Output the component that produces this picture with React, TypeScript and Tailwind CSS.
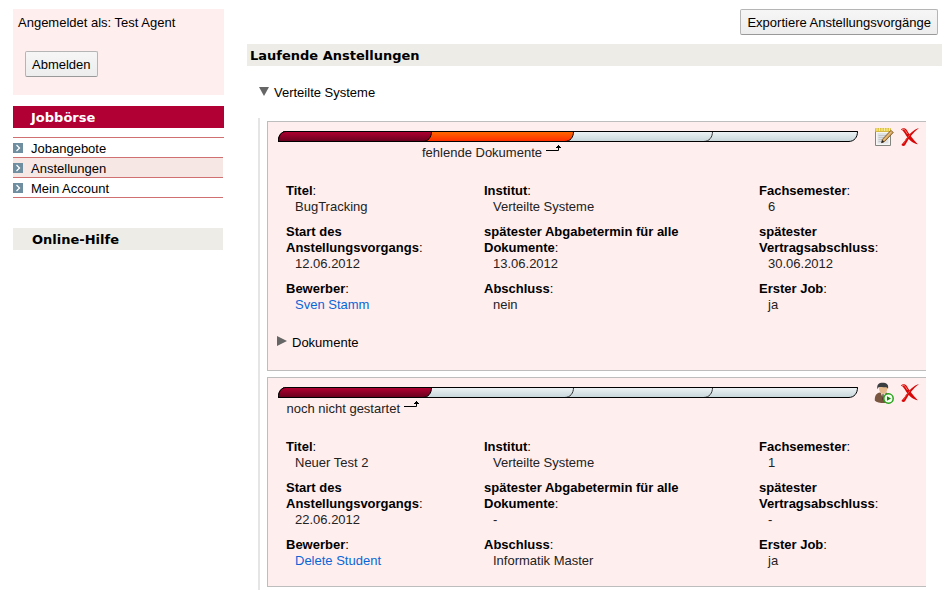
import { useId } from "react";

type Field = { label: string; value: string; link?: boolean };

const firstJob: Field[] = [
  { label: "Titel", value: "BugTracking" },
  { label: "Institut", value: "Verteilte Systeme" },
  { label: "Fachsemester", value: "6" },
  { label: "Start des Anstellungsvorgangs", value: "12.06.2012" },
  { label: "spätester Abgabetermin für alle Dokumente", value: "13.06.2012" },
  { label: "spätester Vertragsabschluss", value: "30.06.2012" },
  { label: "Bewerber", value: "Sven Stamm", link: true },
  { label: "Abschluss", value: "nein" },
  { label: "Erster Job", value: "ja" },
];

const secondJob: Field[] = [
  { label: "Titel", value: "Neuer Test 2" },
  { label: "Institut", value: "Verteilte Systeme" },
  { label: "Fachsemester", value: "1" },
  { label: "Start des Anstellungsvorgangs", value: "22.06.2012" },
  { label: "spätester Abgabetermin für alle Dokumente", value: "-" },
  { label: "spätester Vertragsabschluss", value: "-" },
  { label: "Bewerber", value: "Delete Student", link: true },
  { label: "Abschluss", value: "Informatik Master" },
  { label: "Erster Job", value: "ja" },
];

// Right ends of the four stages, on a bar 580 units long
const stageEnds = [154, 296, 435, 580];

function DeleteIcon() {
  return (
    <svg viewBox="0 0 20 20" className="size-5" aria-hidden="true">
      <path d="M.8 2.600C2.500 .8 5.200 .8 6.600 2.800C9 6.800 12.500 12 17.800 17.200C13.500 17 9 13 6.200 8.800C4.300 5.700 3 3.400 .8 2.600Z" fill="#d80808" />
      <path d="M19 1C13.500 2.300 8 8.500 5.200 13.200C3.600 15.600 2.400 16.400 1.600 17.400C1.200 18.800 4 19.600 5.200 18C9 11 13 5.500 19 1Z" fill="#d80808" />
      <path d="M2 2.800C3.600 1.800 4.600 2.300 5.500 3.800L7.500 7" stroke="#f0796f" strokeWidth="1" fill="none" />
      <path d="M3.500 16.800C5 13.800 7.500 10.400 10 7.800" stroke="#ee4238" strokeWidth="1" fill="none" />
    </svg>
  );
}

function EditIcon() {
  return (
    <svg viewBox="0 0 20 20" className="size-5" aria-hidden="true">
      <path d="M1.500 4H16.500V18.500H1.500Z" fill="#f6f6f4" stroke="#85857f" />
      <path d="M3.500 6H14.500V16.500H3.500Z" fill="#e0e3e6" />
      <path d="M4.500 8.500H12M4.500 10.500H11M4.500 12.500H9M4.500 14.500H8" stroke="#c3c6c9" />
      <path d="M1.500 1.500H16.500V4.500H1.500Z" fill="#e6cb45" stroke="#d3b536" strokeWidth=".8" />
      <path d="M3 1V4M5.500 1V4M8 1V4M10.500 1V4M13 1V4M15.500 1V4" stroke="#fff2a0" strokeWidth=".9" />
      <path d="M16.800 3.500L19.300 5.400L10.800 14.300L7.600 15.700L8.400 12.400Z" fill="#d6a35c" stroke="#7a5526" strokeWidth=".9" />
      <path d="M17.600 4.600L9.700 13.200" stroke="#f3d39c" strokeWidth=".8" />
      <path d="M8.400 13L7.200 16.100L10.200 14.900Z" fill="#222" />
    </svg>
  );
}

function StartIcon() {
  return (
    <svg viewBox="0 0 20 22" className="h-[22px] w-5" aria-hidden="true">
      <path d="M.8 18.500C.5 13.500 2.500 11 6 10.500L12 10.500C15 11 16.500 13 16.500 16V20.500C11 21.500 3 21.300 .8 18.500Z" fill="#78563f" />
      <path d="M6.500 10L9 17L12 10Z" fill="#f3f0ec" />
      <path d="M8.500 12L9.500 12L10 17L9 18.500L8 17Z" fill="#54392a" />
      <path d="M5 5.500C5 3 13 3 13.300 5.500C13.500 9 12 12 9.200 12C6.500 12 5 9 5 5.500Z" fill="#e3b98c" />
      <path d="M3.400 7.200C2.500 2.500 5 .8 8.500 .8C12.500 .8 15 2.500 14 7C13.500 5.500 12.500 5 11 5.200C8.500 5.500 6 4.800 4.800 5.200C4 5.500 3.900 6.500 3.400 7.200Z" fill="#3b3e40" />
      <circle cx="14.500" cy="16.500" r="4.700" fill="#f4fff0" stroke="#25a318" strokeWidth="1.500" />
      <path d="M13 14.200L17 16.500L13 18.800Z" fill="#1c7d12" />
    </svg>
  );
}

function ProgressBar({ done, active }: { done: number; active?: number }) {
  const id = useId();
  // Stages are painted from right to left, so each rounded end lies over the next stage
  const stages = [3, 2, 1, 0];
  return (
    <svg viewBox="0 0 580 11" preserveAspectRatio="none" className="block h-[11px] w-full" role="img" aria-label="Fortschritt">
      <defs>
        <linearGradient id={`${id}done`} x1="0" y1="0" x2="0" y2="1">
          <stop offset="0" stopColor="#b30032" />
          <stop offset="1" stopColor="#66001c" />
        </linearGradient>
        <linearGradient id={`${id}active`} x1="0" y1="0" x2="0" y2="1">
          <stop offset="0" stopColor="#ff6a00" />
          <stop offset="1" stopColor="#ff2a00" />
        </linearGradient>
        <linearGradient id={`${id}open`} x1="0" y1="0" x2="0" y2="1">
          <stop offset="0" stopColor="#eef3f5" />
          <stop offset="1" stopColor="#c6d6da" />
        </linearGradient>
      </defs>
      {stages.map((stage) => {
        const end = stageEnds[stage] - 0.5;
        const kind = stage < done ? "done" : stage === active ? "active" : "open";
        return (
          <path
            key={stage}
            d={`M8.5 .5H${end}C${end} 6 ${end - 3} 10.500 ${end - 9} 10.500H.5C.5 5 3 .5 8.500 .5Z`}
            fill={`url(#${id}${kind})`}
            stroke={kind === "open" && stage < 3 ? "#333" : "#000"}
          />
        );
      })}
      <path d="M8.500 .5H579.500M.5 10.500H571" stroke="#000" fill="none" />
    </svg>
  );
}

function JobCard({
  fields,
  done,
  active,
  status,
  statusStage,
  action,
  documents,
}: {
  fields: Field[];
  done: number;
  active?: number;
  status: string;
  statusStage: number;
  action: "edit" | "start";
  documents?: boolean;
}) {
  return (
    <article className="border border-r-0 border-[#bdbdbd] bg-[#ffeeee] pb-[17px]">
      <div className="flex items-start gap-4 pr-1.5 pl-2.5">
        <div className="flex-1 pt-[9px]">
          <ProgressBar done={done} active={active} />
          <div
            className="flex justify-end gap-1 pt-[3px] pr-3"
            style={{ width: `${(stageEnds[statusStage] / 580) * 100}%` }}
          >
            <span className="whitespace-nowrap text-[#222]">{status}</span>
            <svg viewBox="0 0 16 12" className="h-3 w-4" aria-hidden="true">
              <path d="M0 5.500H12.500V0M10 2.500H15M11 1.500H14" stroke="#000" fill="none" />
            </svg>
          </div>
        </div>
        <div className="flex h-[30px] items-center gap-1.5">
          <button type="button" aria-label={action === "edit" ? "Bearbeiten" : "Starten"}>
            {action === "edit" ? <EditIcon /> : <StartIcon />}
          </button>
          <button type="button" aria-label="Löschen">
            <DeleteIcon />
          </button>
        </div>
      </div>
      <dl className="mt-[22px] grid grid-cols-[198fr_275fr_167fr] gap-y-[9px] pl-[18px]">
        {fields.map((field) => (
          <div key={field.label} className="pr-6">
            <dt>
              <b>{field.label}</b>:
            </dt>
            <dd className="pl-[9px] text-[#222]">
              {field.link ? (
                <a href="#bewerber" className="text-[#0a66d6]">
                  {field.value}
                </a>
              ) : (
                field.value
              )}
            </dd>
          </div>
        ))}
      </dl>
      {documents && (
        <button type="button" className="mt-[22px] mb-0.5 ml-[9px] flex items-center gap-[5px]">
          <svg viewBox="0 0 10 10" className="mb-1 size-2.5" aria-hidden="true">
            <path d="M0 0L10 5L0 10Z" fill="#666" />
          </svg>
          Dokumente
        </button>
      )}
    </article>
  );
}

function NavItem({ label, selected }: { label: string; selected?: boolean }) {
  return (
    <li className={`border-b border-[#d07070] ${selected ? "bg-[#f7e7e4]" : ""}`}>
      <a href="#nav" className="flex items-center gap-2 pt-[3px]">
        <svg viewBox="0 0 10 10" className="mb-0.5 size-2.5" aria-hidden="true">
          <path d="M0 0H10V10H0Z" fill="#6f8ea0" />
          <path d="M3.500 2L6.500 5L3.500 8" stroke="#fff" strokeWidth="1.300" fill="none" />
        </svg>
        {label}
      </a>
    </li>
  );
}

const buttonStyle =
  "h-[26px] rounded-[2px] border border-[#b5b5b5] border-b-[#999] bg-linear-to-b from-[#f6f6f6] to-[#ededed] px-1.5 pt-0.5";

const headingStyle = "pt-px font-['DejaVu_Sans',Verdana,sans-serif] leading-[21px] font-bold";

export default function App() {
  return (
    <div className="flex items-start bg-white pt-[9px] pr-1.5 pl-[13px] font-['Liberation_Sans',Arial,sans-serif] text-[13px] leading-4 text-black">
      <aside className="w-[211px] shrink-0">
        <div className="h-[86px] bg-[#ffeeee] px-[5px] pt-1.5">
          <p>Angemeldet als: Test Agent</p>
          <button type="button" className={`mt-5 ml-[7px] ${buttonStyle}`}>
            Abmelden
          </button>
        </div>
        <h2 className={`mt-[11px] bg-[#b10034] pl-[18px] text-white ${headingStyle}`}>Jobbörse</h2>
        <nav className="mt-[9px] border-t border-[#d07070]">
          <ul className="mr-px">
            <NavItem label="Jobangebote" />
            <NavItem label="Anstellungen" selected />
            <NavItem label="Mein Account" />
          </ul>
        </nav>
        <h2 className={`mt-[30px] mr-px bg-[#edece7] pl-[19px] ${headingStyle}`}>Online-Hilfe</h2>
      </aside>
      <main className="ml-[23px] min-w-0 flex-1">
        <div className="flex justify-end pr-1">
          <button type="button" className={buttonStyle}>
            Exportiere Anstellungsvorgänge
          </button>
        </div>
        <h1 className={`mt-[9px] bg-[#edece7] pl-[3px] ${headingStyle}`}>Laufende Anstellungen</h1>
        <button type="button" className="mt-[19px] ml-3 flex items-center gap-[5px]">
          <svg viewBox="0 0 10 9" className="mb-1 h-[9px] w-2.5" aria-hidden="true">
            <path d="M0 0H10L5 9Z" fill="#666" />
          </svg>
          Verteilte Systeme
        </button>
        <section className="mt-[17px] mr-4 ml-[11px] flex flex-col gap-1.5 border-l-2 border-[#e5e5e5] pt-[3px] pb-[3px] pl-[7px]">
          <JobCard fields={firstJob} done={1} active={1} status="fehlende Dokumente" statusStage={1} action="edit" documents />
          <JobCard fields={secondJob} done={1} status="noch nicht gestartet" statusStage={0} action="start" />
        </section>
      </main>
    </div>
  );
}
